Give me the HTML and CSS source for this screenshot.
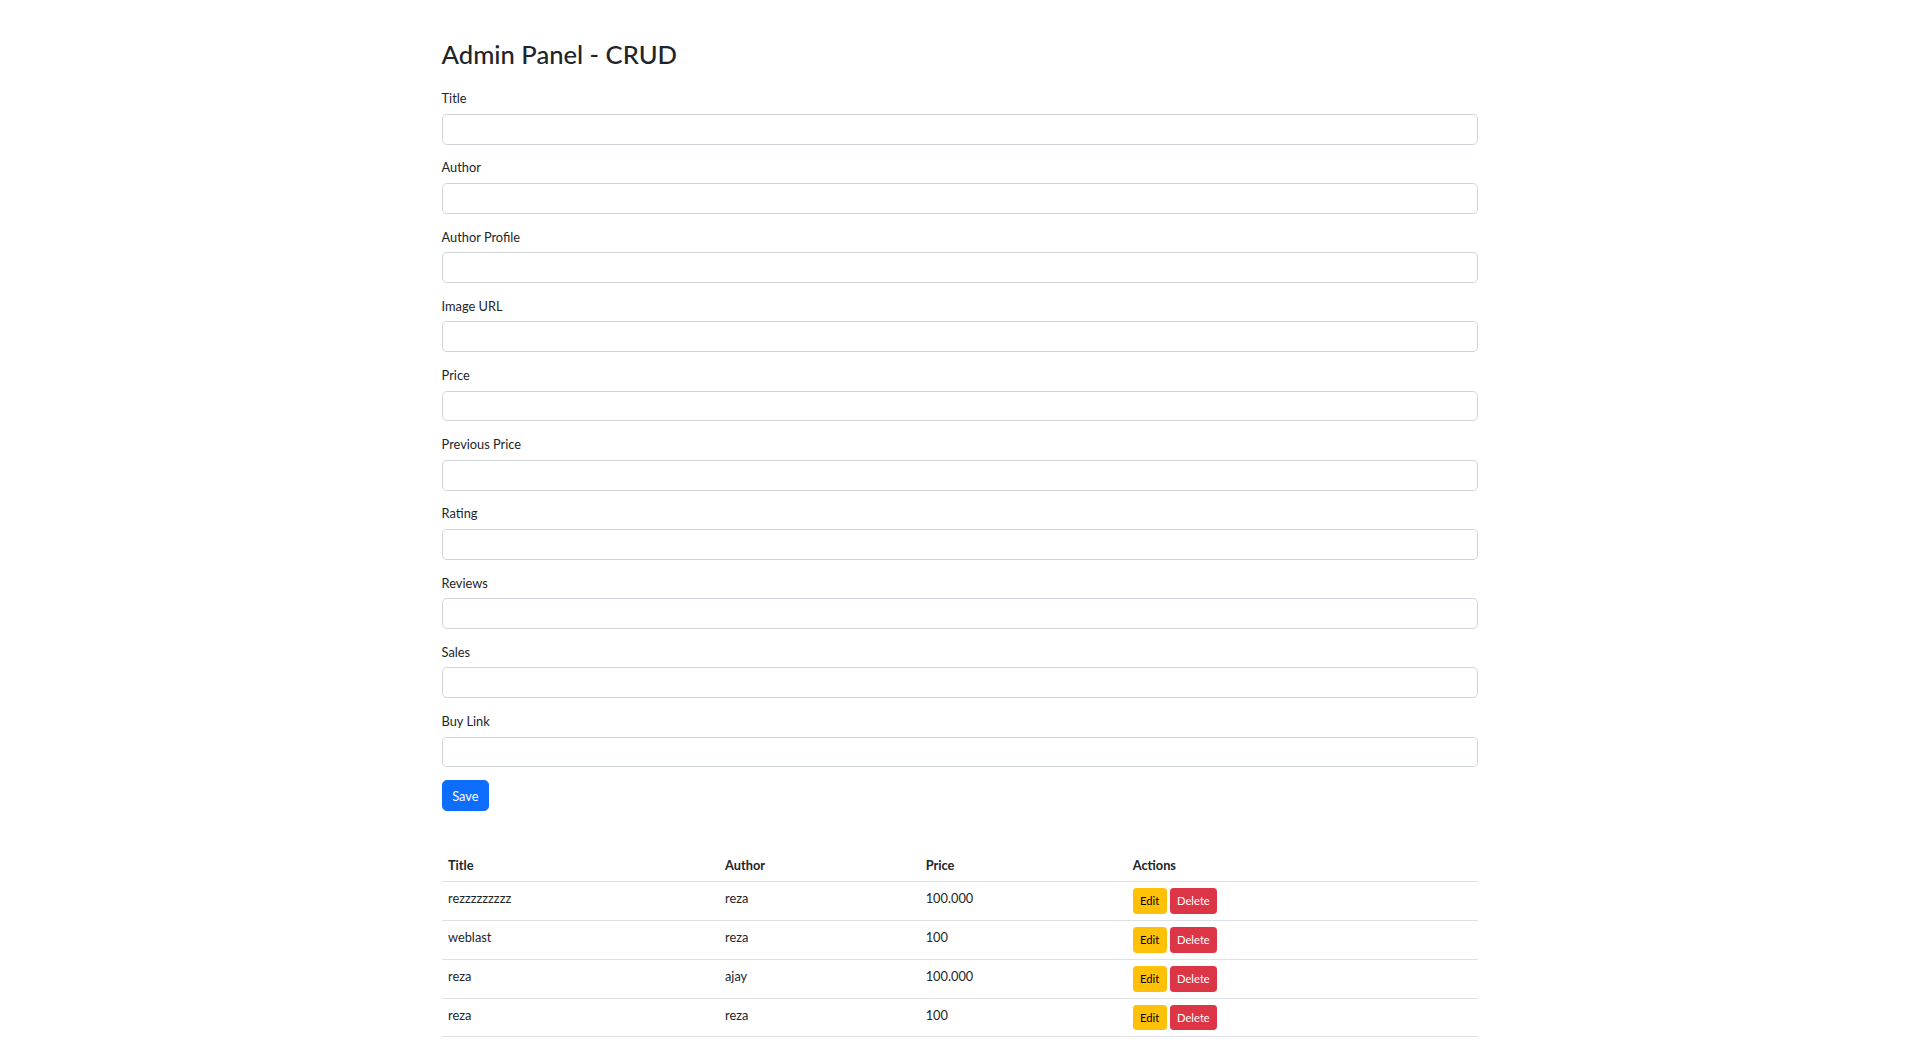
FILE: index.html
```html
<!DOCTYPE html>
<html lang="en">
<head>
<meta charset="utf-8">
<title>Admin Panel - CRUD</title>
<link rel="stylesheet" href="styles.css">
</head>
<body>
<div class="container">
  <h2 class="page-title">Admin Panel - CRUD</h2>
  <form class="crud-form">
    <div class="field"><label class="form-label">Title</label><input class="form-control" type="text"></div>
    <div class="field"><label class="form-label">Author</label><input class="form-control" type="text"></div>
    <div class="field"><label class="form-label">Author Profile</label><input class="form-control" type="text"></div>
    <div class="field"><label class="form-label">Image URL</label><input class="form-control" type="text"></div>
    <div class="field"><label class="form-label">Price</label><input class="form-control" type="text"></div>
    <div class="field"><label class="form-label">Previous Price</label><input class="form-control" type="text"></div>
    <div class="field"><label class="form-label">Rating</label><input class="form-control" type="text"></div>
    <div class="field"><label class="form-label">Reviews</label><input class="form-control" type="text"></div>
    <div class="field"><label class="form-label">Sales</label><input class="form-control" type="text"></div>
    <div class="field"><label class="form-label">Buy Link</label><input class="form-control" type="text"></div>
    <button type="button" class="btn btn-primary">Save</button>
  </form>

  <table class="data-table">
    <colgroup>
      <col class="col-title"><col class="col-author"><col class="col-price"><col>
    </colgroup>
    <thead>
      <tr><th>Title</th><th>Author</th><th>Price</th><th>Actions</th></tr>
    </thead>
    <tbody>
      <tr><td>rezzzzzzzzz</td><td>reza</td><td>100.000</td><td class="actions"><button class="btn-sm btn-warning">Edit</button><button class="btn-sm btn-danger">Delete</button></td></tr>
      <tr><td>weblast</td><td>reza</td><td>100</td><td class="actions"><button class="btn-sm btn-warning">Edit</button><button class="btn-sm btn-danger">Delete</button></td></tr>
      <tr><td>reza</td><td>ajay</td><td>100.000</td><td class="actions"><button class="btn-sm btn-warning">Edit</button><button class="btn-sm btn-danger">Delete</button></td></tr>
      <tr><td>reza</td><td>reza</td><td>100</td><td class="actions"><button class="btn-sm btn-warning">Edit</button><button class="btn-sm btn-danger">Delete</button></td></tr>
    </tbody>
  </table>
</div>
</body>
</html>
```
FILE: styles.css
```css
* { box-sizing: border-box; }

html, body {
  margin: 0;
  padding: 0;
  background: #fff;
}

body {
  font-family: Lato, "Liberation Sans", sans-serif;
  font-size: 12.8px;
  line-height: 19.2px;
  color: #212529;
}

.container {
  width: 1056px;
  margin: 0 auto;
  padding: 38.4px 9.6px 0;
}

.page-title {
  margin: 0 0 18.2px;
  padding-top: 1px;
  font-size: 25.6px;
  line-height: 30.72px;
  font-weight: 500;
  color: #212529;
}

.crud-form {
  display: flex;
  flex-direction: column;
  align-items: flex-start;
}

.field {
  width: 100%;
  margin-bottom: 12.8px;
}

.form-label {
  display: block;
  margin-bottom: 5.4px;
  padding-top: 1px;
  font-size: 12.8px;
  line-height: 19.2px;
}

.form-control {
  display: block;
  width: 100%;
  height: 30.8px;
  padding: 4.8px 9.6px;
  font-family: inherit;
  font-size: 12.8px;
  color: #212529;
  background: #fff;
  border: 1px solid #ced4da;
  border-radius: 4.8px;
  outline: none;
}

.btn {
  display: inline-block;
  height: 30.8px;
  padding: 5.4px 9.6px 4.2px;
  font-family: inherit;
  font-size: 12.8px;
  line-height: 19.2px;
  border: 1px solid transparent;
  border-radius: 4.8px;
  cursor: pointer;
}

.btn-primary {
  background: #0d6efd;
  border-color: #0d6efd;
  color: #fff;
}

.data-table {
  width: 100%;
  margin-top: 38.4px;
  border-collapse: collapse;
  table-layout: fixed;
  vertical-align: top;
}

.col-title { width: 277px; }
.col-author { width: 200.7px; }
.col-price { width: 207px; }

.data-table th,
.data-table td {
  padding: 6.4px;
  text-align: left;
  vertical-align: top;
  border-bottom: 1px solid #dee2e6;
  line-height: 19.2px;
}

.data-table th {
  padding-top: 6.9px;
  padding-bottom: 5.9px;
  font-weight: 700;
  color: #212529;
}

.data-table td {
  padding-top: 6.9px;
  padding-bottom: 5.3px;
}

.data-table td.actions {
  padding-top: 6.1px;
  padding-bottom: 6.1px;
  white-space: nowrap;
}

.btn-sm {
  display: inline-block;
  height: 25.6px;
  padding: 3.6px 6.4px 2.8px;
  font-family: inherit;
  font-size: 11.2px;
  line-height: 16.8px;
  border: 1px solid transparent;
  border-radius: 3.2px;
  vertical-align: top;
  cursor: pointer;
}

.btn-sm + .btn-sm { margin-left: 3px; }

.btn-warning {
  background: #ffc107;
  border-color: #ffc107;
  color: #000;
}

.btn-danger {
  background: #dc3545;
  border-color: #dc3545;
  color: #fff;
}
```
